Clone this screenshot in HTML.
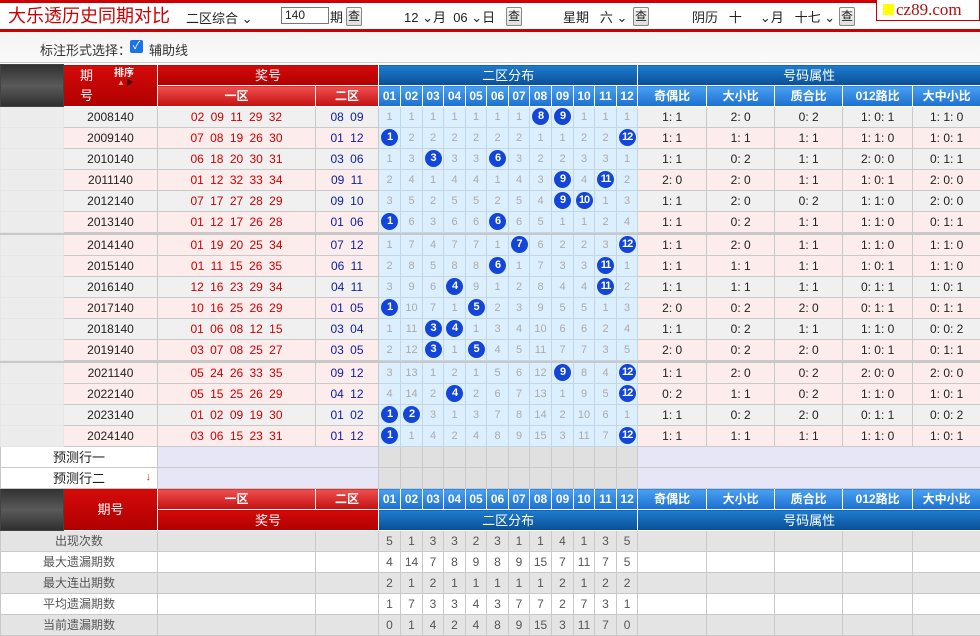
<!DOCTYPE html>
<html><head><meta charset="utf-8">
<style>
*{margin:0;padding:0;box-sizing:border-box}
body{width:980px;height:635px;overflow:hidden;background:#fff;font-family:"Liberation Sans","Noto Sans CJK SC",sans-serif;font-size:12px;color:#222;position:relative}
.top{position:absolute;left:0;top:0;width:980px;height:32px;border-top:3px solid #c00;border-bottom:3px solid #c00;background:#fff}
.ab{position:absolute;white-space:nowrap}
.btn{display:inline-block;width:16px;height:19px;border:1px solid #888;border-radius:2px;background:linear-gradient(#fafafa,#ddd);font-size:12px;line-height:17px;text-align:center}
.bar{position:absolute;left:0;top:32px;width:980px;height:31px;background:linear-gradient(#f4f4f4,#fafafa);border-bottom:1px solid #ccc}
table{position:absolute;left:0;top:64px;border-collapse:collapse;table-layout:fixed;width:980px}
tr{height:21px}
td{border:1px solid #c9c9c9;height:21px;padding:0;text-align:center;white-space:nowrap;overflow:hidden;font-size:12px;line-height:19px}
.rh{background:linear-gradient(#d40a0a,#b00000);color:#fff;font-size:13px;border-color:#fff}
.rl{background:linear-gradient(#f05050,#c41010);color:#fff;font-weight:bold;border-color:#fff}
.bh{background:linear-gradient(#1e7cd0,#0a4f94);color:#fff;font-size:13px;border-color:#fff}
.bl{background:linear-gradient(#4aa0f0,#1a70d0);color:#fff;font-weight:bold;font-size:12px;border-color:#fff}
.lz{background:linear-gradient(#333,#5a5a5a 50%,#2e2e2e);border-color:#444}
.lc{background:#ececec;border-color:#e6e6e6}
.n1{color:#c00;word-spacing:3px}
.n2{color:#1020a0;word-spacing:3px}
.s{background:#dcefff;color:#aaa;font-size:11px;border-color:#c4d6e4}
.g{background:#f0f0f0}.p{background:#fdecec}
.b{display:inline-block;width:17px;height:17px;border-radius:50%;background:#1346d8;color:#fff;font-weight:bold;font-size:11px;line-height:17px;vertical-align:middle;letter-spacing:-1px}
.sep{height:2px}
.sep td{height:2px;background:#c8c8c8;border-color:#c8c8c8;line-height:0;font-size:0}
.pl{background:#e6e6f6}.ps{background:#e0e0e0}
.st td{color:#555;font-size:12px}
.sg td{background:#e4e4e4}.sw td{background:#fff}
.hd{position:relative;height:40px;overflow:hidden}
</style></head><body>
<div class="top"></div>
<div class="ab" style="left:8px;top:5px;font-size:18px;color:#c00;line-height:22px">大乐透历史同期对比</div>
<div class="ab" style="left:186px;top:8px;font-size:13px">二区综合 ⌄</div>
<div class="ab" style="left:281px;top:7px;width:48px;height:17px;border:1px solid #777;font-size:12px;padding-left:3px;line-height:15px">140</div>
<div class="ab" style="left:330px;top:7px;font-size:13px">期</div>
<div class="ab" style="left:346px;top:7px"><span class="btn">查</span></div>
<div class="ab" style="left:404px;top:7px;font-size:13px">12 ⌄月&nbsp; 06 ⌄日</div>
<div class="ab" style="left:506px;top:7px"><span class="btn">查</span></div>
<div class="ab" style="left:563px;top:7px;font-size:13px">星期&nbsp;&nbsp; 六 ⌄</div>
<div class="ab" style="left:633px;top:7px"><span class="btn">查</span></div>
<div class="ab" style="left:692px;top:7px;font-size:13px">阴历&nbsp;&nbsp; 十&nbsp;&nbsp;&nbsp;&nbsp; ⌄月&nbsp;&nbsp; 十七 ⌄</div>
<div class="ab" style="left:839px;top:7px"><span class="btn">查</span></div>
<div class="ab" style="left:876px;top:0;width:104px;height:21px;border:1px solid #c00;border-top:none;background:#fff;font-family:'Liberation Serif',serif;font-size:17px;color:#b01010;line-height:20px;padding-left:6px"><span style="display:inline-block;width:11px;height:11px;background:#ff0;margin-right:2px"></span>cz89.com</div>
<div class="bar"></div>
<div class="ab" style="left:40px;top:40px;font-size:13px;color:#333">标注形式选择：</div>
<div class="ab" style="left:130px;top:40px;width:13px;height:13px;background:#1a73e8;border-radius:2px;color:#fff;font-size:11px;line-height:13px;text-align:center">✓</div>
<div class="ab" style="left:149px;top:40px;font-size:13px;color:#333">辅助线</div>

<table>
<colgroup><col style="width:63px"><col style="width:94px"><col style="width:158px"><col style="width:63px">
<col style="width:22px"><col style="width:22px"><col style="width:21px"><col style="width:22px"><col style="width:21px"><col style="width:22px"><col style="width:21px"><col style="width:22px"><col style="width:22px"><col style="width:21px"><col style="width:22px"><col style="width:21px">
<col style="width:69px"><col style="width:68px"><col style="width:68px"><col style="width:70px"><col style="width:68px"></colgroup>
<tr style="height:20px"><td class="lz" rowspan="2"></td><td class="rh" rowspan="2"><div class="hd"><span style="position:absolute;left:16px;top:0;line-height:20px">期</span><span style="position:absolute;left:16px;top:20px;line-height:20px">号</span><span style="position:absolute;left:50px;top:2px;font-size:10px;font-weight:bold;line-height:12px">排序</span><span style="position:absolute;left:53px;top:13px;font-size:8px;line-height:8px;color:#f99">▲</span><span style="position:absolute;left:62px;top:13px;font-size:8px;line-height:8px;color:#500">▶</span></div></td><td class="rh" colspan="2">奖号</td><td class="bh" colspan="12">二区分布</td><td class="bh" colspan="5">号码属性</td></tr>
<tr><td class="rl">一区</td><td class="rl">二区</td><td class="bl">01</td><td class="bl">02</td><td class="bl">03</td><td class="bl">04</td><td class="bl">05</td><td class="bl">06</td><td class="bl">07</td><td class="bl">08</td><td class="bl">09</td><td class="bl">10</td><td class="bl">11</td><td class="bl">12</td><td class="bl">奇偶比</td><td class="bl">大小比</td><td class="bl">质合比</td><td class="bl">012路比</td><td class="bl">大中小比</td></tr>

<tr class="g"><td class="lc"></td><td>2008140</td><td class="n1">02 09 11 29 32</td><td class="n2">08 09</td><td class="s">1</td><td class="s">1</td><td class="s">1</td><td class="s">1</td><td class="s">1</td><td class="s">1</td><td class="s">1</td><td class="s"><span class="b">8</span></td><td class="s"><span class="b">9</span></td><td class="s">1</td><td class="s">1</td><td class="s">1</td><td>1: 1</td><td>2: 0</td><td>0: 2</td><td>1: 0: 1</td><td>1: 1: 0</td></tr>
<tr class="p"><td class="lc"></td><td>2009140</td><td class="n1">07 08 19 26 30</td><td class="n2">01 12</td><td class="s"><span class="b">1</span></td><td class="s">2</td><td class="s">2</td><td class="s">2</td><td class="s">2</td><td class="s">2</td><td class="s">2</td><td class="s">1</td><td class="s">1</td><td class="s">2</td><td class="s">2</td><td class="s"><span class="b">12</span></td><td>1: 1</td><td>1: 1</td><td>1: 1</td><td>1: 1: 0</td><td>1: 0: 1</td></tr>
<tr class="g"><td class="lc"></td><td>2010140</td><td class="n1">06 18 20 30 31</td><td class="n2">03 06</td><td class="s">1</td><td class="s">3</td><td class="s"><span class="b">3</span></td><td class="s">3</td><td class="s">3</td><td class="s"><span class="b">6</span></td><td class="s">3</td><td class="s">2</td><td class="s">2</td><td class="s">3</td><td class="s">3</td><td class="s">1</td><td>1: 1</td><td>0: 2</td><td>1: 1</td><td>2: 0: 0</td><td>0: 1: 1</td></tr>
<tr class="p"><td class="lc"></td><td>2011140</td><td class="n1">01 12 32 33 34</td><td class="n2">09 11</td><td class="s">2</td><td class="s">4</td><td class="s">1</td><td class="s">4</td><td class="s">4</td><td class="s">1</td><td class="s">4</td><td class="s">3</td><td class="s"><span class="b">9</span></td><td class="s">4</td><td class="s"><span class="b">11</span></td><td class="s">2</td><td>2: 0</td><td>2: 0</td><td>1: 1</td><td>1: 0: 1</td><td>2: 0: 0</td></tr>
<tr class="g"><td class="lc"></td><td>2012140</td><td class="n1">07 17 27 28 29</td><td class="n2">09 10</td><td class="s">3</td><td class="s">5</td><td class="s">2</td><td class="s">5</td><td class="s">5</td><td class="s">2</td><td class="s">5</td><td class="s">4</td><td class="s"><span class="b">9</span></td><td class="s"><span class="b">10</span></td><td class="s">1</td><td class="s">3</td><td>1: 1</td><td>2: 0</td><td>0: 2</td><td>1: 1: 0</td><td>2: 0: 0</td></tr>
<tr class="p"><td class="lc"></td><td>2013140</td><td class="n1">01 12 17 26 28</td><td class="n2">01 06</td><td class="s"><span class="b">1</span></td><td class="s">6</td><td class="s">3</td><td class="s">6</td><td class="s">6</td><td class="s"><span class="b">6</span></td><td class="s">6</td><td class="s">5</td><td class="s">1</td><td class="s">1</td><td class="s">2</td><td class="s">4</td><td>1: 1</td><td>0: 2</td><td>1: 1</td><td>1: 1: 0</td><td>0: 1: 1</td></tr>
<tr class="sep"><td colspan="21"></td></tr>
<tr class="p"><td class="lc"></td><td>2014140</td><td class="n1">01 19 20 25 34</td><td class="n2">07 12</td><td class="s">1</td><td class="s">7</td><td class="s">4</td><td class="s">7</td><td class="s">7</td><td class="s">1</td><td class="s"><span class="b">7</span></td><td class="s">6</td><td class="s">2</td><td class="s">2</td><td class="s">3</td><td class="s"><span class="b">12</span></td><td>1: 1</td><td>2: 0</td><td>1: 1</td><td>1: 1: 0</td><td>1: 1: 0</td></tr>
<tr class="p"><td class="lc"></td><td>2015140</td><td class="n1">01 11 15 26 35</td><td class="n2">06 11</td><td class="s">2</td><td class="s">8</td><td class="s">5</td><td class="s">8</td><td class="s">8</td><td class="s"><span class="b">6</span></td><td class="s">1</td><td class="s">7</td><td class="s">3</td><td class="s">3</td><td class="s"><span class="b">11</span></td><td class="s">1</td><td>1: 1</td><td>1: 1</td><td>1: 1</td><td>1: 0: 1</td><td>1: 1: 0</td></tr>
<tr class="g"><td class="lc"></td><td>2016140</td><td class="n1">12 16 23 29 34</td><td class="n2">04 11</td><td class="s">3</td><td class="s">9</td><td class="s">6</td><td class="s"><span class="b">4</span></td><td class="s">9</td><td class="s">1</td><td class="s">2</td><td class="s">8</td><td class="s">4</td><td class="s">4</td><td class="s"><span class="b">11</span></td><td class="s">2</td><td>1: 1</td><td>1: 1</td><td>1: 1</td><td>0: 1: 1</td><td>1: 0: 1</td></tr>
<tr class="p"><td class="lc"></td><td>2017140</td><td class="n1">10 16 25 26 29</td><td class="n2">01 05</td><td class="s"><span class="b">1</span></td><td class="s">10</td><td class="s">7</td><td class="s">1</td><td class="s"><span class="b">5</span></td><td class="s">2</td><td class="s">3</td><td class="s">9</td><td class="s">5</td><td class="s">5</td><td class="s">1</td><td class="s">3</td><td>2: 0</td><td>0: 2</td><td>2: 0</td><td>0: 1: 1</td><td>0: 1: 1</td></tr>
<tr class="g"><td class="lc"></td><td>2018140</td><td class="n1">01 06 08 12 15</td><td class="n2">03 04</td><td class="s">1</td><td class="s">11</td><td class="s"><span class="b">3</span></td><td class="s"><span class="b">4</span></td><td class="s">1</td><td class="s">3</td><td class="s">4</td><td class="s">10</td><td class="s">6</td><td class="s">6</td><td class="s">2</td><td class="s">4</td><td>1: 1</td><td>0: 2</td><td>1: 1</td><td>1: 1: 0</td><td>0: 0: 2</td></tr>
<tr class="p"><td class="lc"></td><td>2019140</td><td class="n1">03 07 08 25 27</td><td class="n2">03 05</td><td class="s">2</td><td class="s">12</td><td class="s"><span class="b">3</span></td><td class="s">1</td><td class="s"><span class="b">5</span></td><td class="s">4</td><td class="s">5</td><td class="s">11</td><td class="s">7</td><td class="s">7</td><td class="s">3</td><td class="s">5</td><td>2: 0</td><td>0: 2</td><td>2: 0</td><td>1: 0: 1</td><td>0: 1: 1</td></tr>
<tr class="sep"><td colspan="21"></td></tr>
<tr class="p"><td class="lc"></td><td>2021140</td><td class="n1">05 24 26 33 35</td><td class="n2">09 12</td><td class="s">3</td><td class="s">13</td><td class="s">1</td><td class="s">2</td><td class="s">1</td><td class="s">5</td><td class="s">6</td><td class="s">12</td><td class="s"><span class="b">9</span></td><td class="s">8</td><td class="s">4</td><td class="s"><span class="b">12</span></td><td>1: 1</td><td>2: 0</td><td>0: 2</td><td>2: 0: 0</td><td>2: 0: 0</td></tr>
<tr class="p"><td class="lc"></td><td>2022140</td><td class="n1">05 15 25 26 29</td><td class="n2">04 12</td><td class="s">4</td><td class="s">14</td><td class="s">2</td><td class="s"><span class="b">4</span></td><td class="s">2</td><td class="s">6</td><td class="s">7</td><td class="s">13</td><td class="s">1</td><td class="s">9</td><td class="s">5</td><td class="s"><span class="b">12</span></td><td>0: 2</td><td>1: 1</td><td>0: 2</td><td>1: 1: 0</td><td>1: 0: 1</td></tr>
<tr class="g"><td class="lc"></td><td>2023140</td><td class="n1">01 02 09 19 30</td><td class="n2">01 02</td><td class="s"><span class="b">1</span></td><td class="s"><span class="b">2</span></td><td class="s">3</td><td class="s">1</td><td class="s">3</td><td class="s">7</td><td class="s">8</td><td class="s">14</td><td class="s">2</td><td class="s">10</td><td class="s">6</td><td class="s">1</td><td>1: 1</td><td>0: 2</td><td>2: 0</td><td>0: 1: 1</td><td>0: 0: 2</td></tr>
<tr class="p"><td class="lc"></td><td>2024140</td><td class="n1">03 06 15 23 31</td><td class="n2">01 12</td><td class="s"><span class="b">1</span></td><td class="s">1</td><td class="s">4</td><td class="s">2</td><td class="s">4</td><td class="s">8</td><td class="s">9</td><td class="s">15</td><td class="s">3</td><td class="s">11</td><td class="s">7</td><td class="s"><span class="b">12</span></td><td>1: 1</td><td>1: 1</td><td>1: 1</td><td>1: 1: 0</td><td>1: 0: 1</td></tr>

<tr><td colspan="2" style="background:#fff;font-size:13px">预测行一</td><td class="pl" colspan="2"></td><td class="ps"></td><td class="ps"></td><td class="ps"></td><td class="ps"></td><td class="ps"></td><td class="ps"></td><td class="ps"></td><td class="ps"></td><td class="ps"></td><td class="ps"></td><td class="ps"></td><td class="ps"></td><td class="pl" colspan="5"></td></tr>
<tr><td colspan="2" style="background:#fff;font-size:13px;position:relative">预测行二<span style="position:absolute;right:6px;top:0;color:#d03010;font-size:11px">↓</span></td><td class="pl" colspan="2"></td><td class="ps"></td><td class="ps"></td><td class="ps"></td><td class="ps"></td><td class="ps"></td><td class="ps"></td><td class="ps"></td><td class="ps"></td><td class="ps"></td><td class="ps"></td><td class="ps"></td><td class="ps"></td><td class="pl" colspan="5"></td></tr>

<tr><td class="lz" rowspan="2"></td><td class="rh" rowspan="2">期号</td><td class="rl">一区</td><td class="rl">二区</td><td class="bl">01</td><td class="bl">02</td><td class="bl">03</td><td class="bl">04</td><td class="bl">05</td><td class="bl">06</td><td class="bl">07</td><td class="bl">08</td><td class="bl">09</td><td class="bl">10</td><td class="bl">11</td><td class="bl">12</td><td class="bl">奇偶比</td><td class="bl">大小比</td><td class="bl">质合比</td><td class="bl">012路比</td><td class="bl">大中小比</td></tr>
<tr><td class="rh" colspan="2">奖号</td><td class="bh" colspan="12">二区分布</td><td class="bh" colspan="5">号码属性</td></tr>

<tr class="st sg"><td colspan="2">出现次数</td><td></td><td></td><td>5</td><td>1</td><td>3</td><td>3</td><td>2</td><td>3</td><td>1</td><td>1</td><td>4</td><td>1</td><td>3</td><td>5</td><td></td><td></td><td></td><td></td><td></td></tr>
<tr class="st sw"><td colspan="2">最大遗漏期数</td><td></td><td></td><td>4</td><td>14</td><td>7</td><td>8</td><td>9</td><td>8</td><td>9</td><td>15</td><td>7</td><td>11</td><td>7</td><td>5</td><td></td><td></td><td></td><td></td><td></td></tr>
<tr class="st sg"><td colspan="2">最大连出期数</td><td></td><td></td><td>2</td><td>1</td><td>2</td><td>1</td><td>1</td><td>1</td><td>1</td><td>1</td><td>2</td><td>1</td><td>2</td><td>2</td><td></td><td></td><td></td><td></td><td></td></tr>
<tr class="st sw"><td colspan="2">平均遗漏期数</td><td></td><td></td><td>1</td><td>7</td><td>3</td><td>3</td><td>4</td><td>3</td><td>7</td><td>7</td><td>2</td><td>7</td><td>3</td><td>1</td><td></td><td></td><td></td><td></td><td></td></tr>
<tr class="st sg"><td colspan="2">当前遗漏期数</td><td></td><td></td><td>0</td><td>1</td><td>4</td><td>2</td><td>4</td><td>8</td><td>9</td><td>15</td><td>3</td><td>11</td><td>7</td><td>0</td><td></td><td></td><td></td><td></td><td></td></tr>
</table>
</body></html>
